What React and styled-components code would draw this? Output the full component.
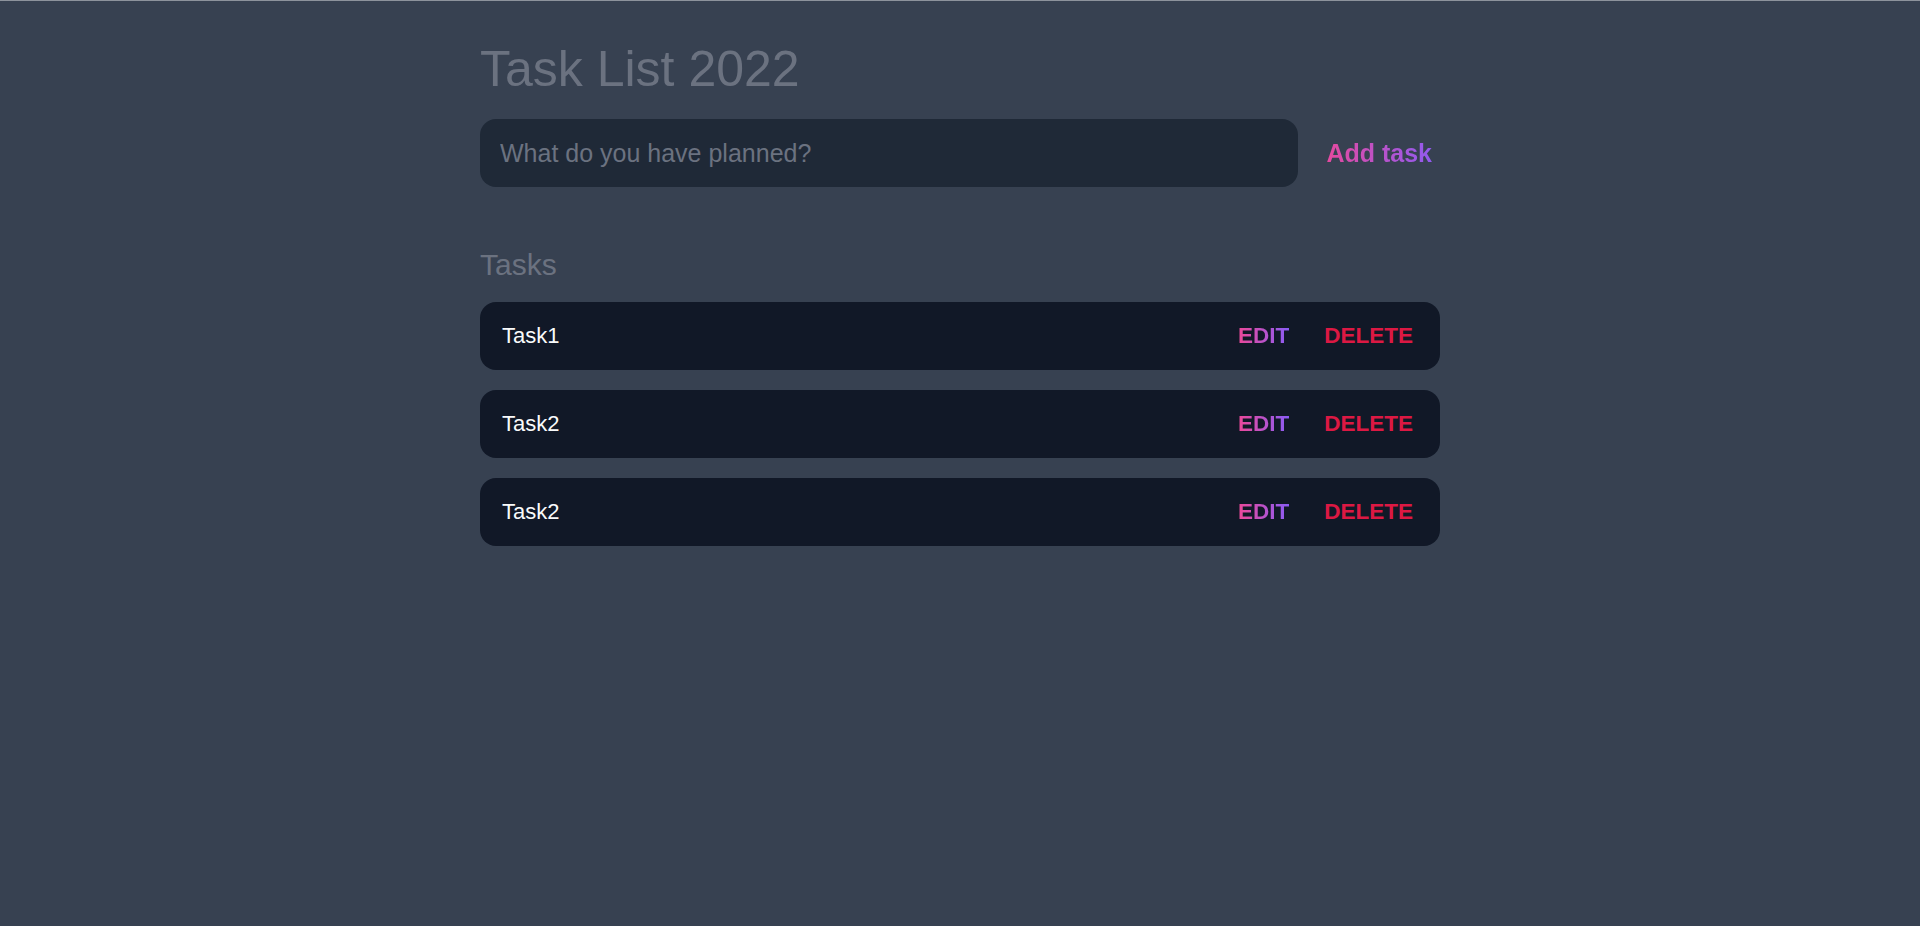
import styled, { createGlobalStyle } from "styled-components";

const GlobalStyle = createGlobalStyle`
  html, body {
    margin: 0;
    padding: 0;
    background: #374151;
  }

  body {
    font-family: "Liberation Sans", Arial, sans-serif;
    border-top: 1px solid #8d939c;
    min-height: 925px;
  }

  * {
    box-sizing: border-box;
  }
`;

const tasks = [
  { id: 1, name: "Task1" },
  { id: 2, name: "Task2" },
  { id: 3, name: "Task2" },
];

const App = () => {
  return (
    <>
      <GlobalStyle />
      <Page>
        <Title>Task List 2022</Title>
        <TaskForm onSubmit={(e) => e.preventDefault()}>
          <TaskInput type="text" placeholder="What do you have planned?" />
          <AddButton type="submit">Add task</AddButton>
        </TaskForm>

        <TasksSection>
          <SectionTitle>Tasks</SectionTitle>
          <TaskList>
            {tasks.map((task) => (
              <TaskRow key={task.id}>
                <TaskName>{task.name}</TaskName>
                <Actions>
                  <ActionButton variant="edit">EDIT</ActionButton>
                  <ActionButton variant="delete">DELETE</ActionButton>
                </Actions>
              </TaskRow>
            ))}
          </TaskList>
        </TasksSection>
      </Page>
    </>
  );
};

const Page = styled.main`
  width: 960px;
  margin: 0 auto;
  padding-top: 40px;
`;

const Title = styled.h1`
  margin: 0 0 21px;
  font-size: 50px;
  font-weight: 400;
  line-height: 57px;
  color: #6b7280;
`;

const TaskForm = styled.form`
  display: flex;
  align-items: center;
  gap: 20px;
`;

const TaskInput = styled.input`
  flex: 1;
  height: 68px;
  padding: 0 20px;
  border: none;
  outline: none;
  border-radius: 16px;
  background: #1f2937;
  color: #e5e7eb;
  font-family: inherit;
  font-size: 25px;

  &::placeholder {
    color: #6b7280;
  }
`;

const gradientText = `
  background: linear-gradient(to right, #ec4899, #8b5cf6);
  -webkit-background-clip: text;
  background-clip: text;
  color: transparent;
`;

const AddButton = styled.button`
  padding: 0 8px;
  border: none;
  background: none;
  font-family: inherit;
  font-size: 25px;
  font-weight: 700;
  cursor: pointer;
  ${gradientText}
`;

const TasksSection = styled.section`
  margin-top: 61px;
`;

const SectionTitle = styled.h2`
  margin: 0 0 20px;
  font-size: 30px;
  font-weight: 400;
  line-height: 34px;
  color: #6b7280;
`;

const TaskList = styled.div`
  display: flex;
  flex-direction: column;
  gap: 20px;
`;

const TaskRow = styled.div`
  display: flex;
  align-items: center;
  justify-content: space-between;
  height: 68px;
  padding: 0 27px 0 22px;
  border-radius: 16px;
  background: #111827;
`;

const TaskName = styled.span`
  font-size: 22px;
  color: #f9fafb;
`;

const Actions = styled.div`
  display: flex;
  align-items: center;
  gap: 35px;
`;

const ActionButton = styled.button`
  padding: 0;
  border: none;
  background: none;
  font-family: inherit;
  font-size: 22.5px;
  font-weight: 700;
  cursor: pointer;
  ${(p) => (p.variant === "edit" ? gradientText : "color: #dc1843;")}
`;

export default App;
